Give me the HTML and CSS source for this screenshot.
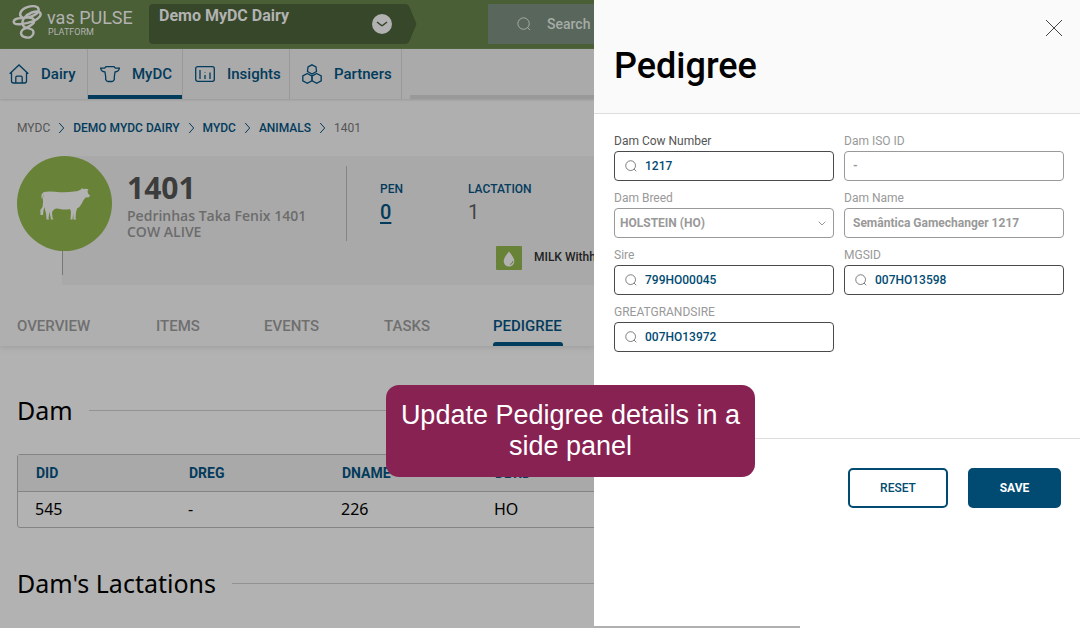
FILE: index.html
```html
<!DOCTYPE html>
<html lang="en">
<head>
<meta charset="utf-8">
<title>Pedigree - VAS PULSE Platform</title>
<link rel="stylesheet" href="styles.css">
</head>
<body>
<svg class="defs" aria-hidden="true">
  <symbol id="search" viewBox="0 0 16 16"><circle cx="7.5" cy="7.5" r="6.500"/><path d="M12 12 15 15"/></symbol>
  <symbol id="chevron" viewBox="0 0 6 12"><path d="M.7 1 5.2 6 .7 11"/></symbol>
</svg>
<div class="layout">
  <div class="app">
    <header class="topbar">
      <a class="brand" href="#">
        <svg class="brand-mark" viewBox="0 0 32 36" aria-hidden="true">
          <path d="M12 14C6 12 8 6 15 3C22 .5 28 1.500 27.500 6C27 11 16 14 10 14C4 14 1 16 2 18.500C3 22 14 20 22 17C29 14 31 10 28.500 8C25 5.500 16 9 12.500 14C9 19 11 23 15 24C20 25 23 26 22 30C21 33 18 34.500 15 34C9 33.500 8 29 11 26C14 23 23 22 23 17C23 14 19 13 16 13.500"/>
        </svg>
        <span class="brand-text"><span class="brand-name">vas PULSE</span><span class="brand-sub">PLATFORM</span></span>
      </a>
      <button class="farm" type="button">
        <svg class="farm-shape" viewBox="0 0 268 40" preserveAspectRatio="none" aria-hidden="true"><path d="M4 0H256Q259 0 260.500 3L267.500 20 260.500 37Q259 40 256 40H4Q0 40 0 36V4Q0 0 4 0Z"/></svg>
        <span class="farm-name">Demo MyDC Dairy</span>
        <svg class="farm-arrow" viewBox="0 0 20 20" aria-hidden="true"><circle cx="10" cy="10" r="10"/><path d="M5 8 9.500 11.500H10.500L15 8"/></svg>
      </button>
      <div class="top-search"><svg class="icon" aria-hidden="true"><use href="#search"/></svg><input type="search" placeholder="Search" aria-label="Search"></div>
    </header>
    <nav class="nav" aria-label="Main">
      <a class="nav-dairy" href="#"><svg viewBox="0 0 20 20" aria-hidden="true"><path d="M.7 9.700 10 1l9.300 8.700M2.500 8.500V17q0 2 2 2h11q2 0 2-2V8.500M6.800 19v-5.500q0-1.300 1.300-1.300h3.800q1.300 0 1.300 1.300V19"/></svg>Dairy</a>
      <a class="nav-mydc active" href="#"><svg viewBox="0 0 20 20" aria-hidden="true"><path d="M.6 4.200H4.500L6 2.700h8L15.500 4.200H19.400Q18.500 7.800 15 8L14.300 13V15.500Q13.500 17.500 12 17.500H8Q6.500 17.500 5.700 15.500V13L5 8Q1.500 7.800.6 4.200Z"/></svg>MyDC</a>
      <a class="nav-insights" href="#"><svg viewBox="0 0 20 20" aria-hidden="true"><rect x=".7" y="2.700" width="18.600" height="14.600" rx="2"/><path d="M5 6v9M10 11v4M15 8.500V15M10 8v.5"/></svg>Insights</a>
      <a class="nav-partners" href="#"><svg viewBox="0 0 20 20" aria-hidden="true"><path d="M10 .8 14 2.800 14.500 7.500 10 10 5.500 7.500 6 2.800ZM5.300 9.500 9.800 12v4.800L5.300 19.200.8 16.800V12ZM14.700 9.500 19.200 12v4.800L14.700 19.200 10.200 16.800V12Z"/></svg>Partners</a>
      <span class="nav-rest"></span>
    </nav>
    <div class="profile">
      <nav class="crumbs" aria-label="Breadcrumb">
        <span>MYDC</span><svg aria-hidden="true"><use href="#chevron"/></svg>
        <a href="#">DEMO MYDC DAIRY</a><svg aria-hidden="true"><use href="#chevron"/></svg>
        <a href="#">MYDC</a><svg aria-hidden="true"><use href="#chevron"/></svg>
        <a href="#">ANIMALS</a><svg aria-hidden="true"><use href="#chevron"/></svg>
        <span>1401</span>
      </nav>
      <section class="animal">
        <div class="avatar">
          <svg viewBox="0 0 50 32" aria-hidden="true"><path d="M4 4Q7 3.200 15 3.800Q26 5 34 3.500Q38 3.500 41 1.500L42 0l1 1L46 .8 48.500 1.200 47.500 3 48 5.500 50 7.500 49 9.200 45.500 9.500Q43 12 41.500 16Q40 19 37 20.500L36 24.500 35.500 30 36.500 31.500H33.500L33.300 25 32.500 31.500H30.500L31 24 30 21Q25 22 20 21Q16 20 14 21.500L12 24 12.500 30 13.500 31.500H11L10 26 9.500 24 8.500 30 9 31.500H6.500L6 25Q4.500 22 5 19L3.500 22 3 27 .5 27 .3 22 2.500 19Q3.500 14 2.800 10L3.500 7.500Q4 5.500 5.500 5.500Q3 6 2.700 9L2 11.500Q0 6 4 4Z"/></svg>
        </div>
        <div class="animal-card">
          <div class="identity"><h1>1401</h1><p>Pedrinhas Taka Fenix 1401</p><p>COW ALIVE</p></div>
          <div class="status">
            <dl class="facts">
              <div><dt>PEN</dt><dd><a href="#">0</a></dd></div>
              <div><dt>LACTATION</dt><dd>1</dd></div>
            </dl>
            <div class="milk"><svg viewBox="0 0 26 24" aria-hidden="true"><rect width="26" height="24" rx="1"/><path d="M13 5.500Q18.500 12 18.300 15.500 17.500 20.500 13 20.500 8.500 20.500 7.700 15.500 7.500 12 13 5.500Z"/><path class="shine" d="M14 18.500q2.500-.5 3-3.500"/></svg><span>MILK Withh</span></div>
          </div>
        </div>
      </section>
      <nav class="tabs" aria-label="Animal">
        <a class="tab-overview" href="#">OVERVIEW</a><a class="tab-items" href="#">ITEMS</a><a class="tab-events" href="#">EVENTS</a><a class="tab-tasks" href="#">TASKS</a><a class="active" href="#">PEDIGREE</a>
      </nav>
    </div>
    <main class="content">
      <h2>Dam</h2>
      <table>
        <thead><tr><th scope="col">DID</th><th scope="col">DREG</th><th scope="col">DNAME</th><th scope="col">DBRD</th></tr></thead>
        <tbody><tr><td>545</td><td>-</td><td>226</td><td>HO</td></tr></tbody>
      </table>
      <h2>Dam's Lactations</h2>
    </main>
  </div>
  <aside class="panel" aria-labelledby="panel-title">
    <header class="panel-head">
      <h2 id="panel-title">Pedigree</h2>
      <button class="close" type="button" aria-label="Close"><svg viewBox="0 0 18 18" aria-hidden="true"><path d="M1 1 17 17M17 1 1 17"/></svg></button>
    </header>
    <form class="form">
      <div class="fields">
        <div class="field strong"><label for="cow">Dam Cow Number</label><div class="control search"><svg class="icon" aria-hidden="true"><use href="#search"/></svg><input id="cow" type="text" value="1217"></div></div>
        <div class="field"><label for="iso">Dam ISO ID</label><div class="control off"><input id="iso" type="text" value="-" disabled></div></div>
        <div class="field"><label for="breed">Dam Breed</label><div class="control off breed"><select id="breed" disabled><option>HOLSTEIN (HO)</option></select><svg class="down" viewBox="0 0 8 5" aria-hidden="true"><path d="M.7.7 4 4 7.300.7"/></svg></div></div>
        <div class="field"><label for="name">Dam Name</label><div class="control off"><input id="name" type="text" value="Semântica Gamechanger 1217" disabled></div></div>
        <div class="field"><label for="sire">Sire</label><div class="control search"><svg class="icon" aria-hidden="true"><use href="#search"/></svg><input id="sire" type="text" value="799HO00045"></div></div>
        <div class="field"><label for="mgs">MGSID</label><div class="control search"><svg class="icon" aria-hidden="true"><use href="#search"/></svg><input id="mgs" type="text" value="007HO13598"></div></div>
        <div class="field"><label for="ggs">GREATGRANDSIRE</label><div class="control search"><svg class="icon" aria-hidden="true"><use href="#search"/></svg><input id="ggs" type="text" value="007HO13972"></div></div>
      </div>
      <div class="actions"><button class="reset" type="reset">RESET</button><button class="save" type="submit">SAVE</button></div>
    </form>
    <div class="panel-edge"></div>
  </aside>
</div>
<div class="callout" role="note">Update Pedigree details in a side panel</div>
</body>
</html>
```
FILE: styles.css
```css
* { box-sizing: border-box; }
body { margin: 0; font-family: Roboto, "Liberation Sans", sans-serif; color: #000; background: #fff; }
h1, h2, p, dl, dd { margin: 0; font-weight: 400; }
a { color: inherit; text-decoration: none; }
button, input, select { font: inherit; color: inherit; }
button { cursor: pointer; }
svg { flex: none; fill: none; stroke: currentColor; }
.defs { position: absolute; width: 0; height: 0; }
.icon { width: 12px; height: 12px; }
.layout { display: grid; grid-template-columns: 55fr 45fr; height: 100vh; overflow: hidden; }
.app { min-width: 0; overflow: hidden; background: #b2b2b2; }

.topbar { display: flex; height: 49px; background: #4a5f36; color: #b2b2b2; }
.brand { display: flex; flex: none; width: 149px; padding-left: 12px; }
.brand-mark { width: 31px; height: 36px; margin-top: 4px; stroke-width: 2.500; }
.brand-text { display: flex; flex-direction: column; padding: 8px 0 0 4px; white-space: nowrap; }
.brand-name { font-size: 18px; line-height: 19px; }
.brand-sub { padding-left: 1px; font-size: 9px; line-height: 10px; }
.farm { position: relative; display: flex; flex: none; width: 268px; height: 40px; margin: 4px 0 0; padding: 0 25px 0 10px; border: 0; background: none; justify-content: space-between; text-align: left; }
.farm-shape { position: absolute; inset: 0; width: 100%; height: 100%; fill: #37472a; stroke: none; }
.farm-name { position: relative; font-size: 16px; line-height: 23px; font-weight: 700; }
.farm-arrow { position: relative; width: 20px; height: 20px; margin-top: 10px; }
.farm-arrow circle { fill: #b2b2b2; stroke: none; }
.farm-arrow path { stroke: #37472a; stroke-width: 1.500; }
.top-search { display: flex; flex: none; align-items: center; width: 240px; height: 40px; margin: 4px 0 0 71px; padding-left: 29px; gap: 16px; background: #59665b; }
.top-search .icon { width: 14px; height: 14px; }
.top-search input { width: 140px; padding: 0; border: 0; background: none; font-size: 14px; font-weight: 500; }
.top-search input::placeholder { color: #a5aca6; opacity: 1; }

.nav { display: flex; height: 50px; background: #aaa; color: #033b5c; font-size: 15px; font-weight: 500; box-shadow: 0 1px 2px #999; position: relative; }
.nav a { display: flex; flex: none; align-items: center; border-right: 1px solid #999; }
.nav svg { width: 20px; height: 20px; stroke-width: 1.300; }
.nav-dairy { width: 88px; padding-left: 9px; gap: 12px; }
.nav-mydc { width: 95px; padding-left: 12px; gap: 12px; }
.nav-insights { width: 107px; padding-left: 12px; gap: 12px; }
.nav-partners { width: 112px; padding-left: 12px; gap: 12px; }
.nav .active { box-shadow: inset 0 -4px #033b5c; }
.nav-rest { flex: 1; margin-left: 8px; box-shadow: inset 0 -4px #999; }

.profile { background: #afafaf; box-shadow: 0 2px 5px #a0a0a0; }
.crumbs { display: flex; align-items: center; height: 57px; padding: 0 17px; gap: 8px; font-size: 12px; color: #555; white-space: nowrap; }
.crumbs a { color: #033b5c; font-weight: 500; }
.crumbs svg { width: 7px; height: 12px; stroke: #033b5c; }
.animal { position: relative; padding-left: 62px; }
.avatar { position: absolute; left: 17px; top: 0; display: grid; place-items: center; width: 95px; height: 95px; border-radius: 50%; background: #688338; }
.avatar svg { width: 50px; height: 32px; fill: #b2b2b2; stroke: none; }
.avatar::after { content: ""; position: absolute; left: 45px; top: 95px; width: 1px; height: 24px; background: #777; }
.animal-card { display: grid; grid-template-columns: 285px 1fr; height: 129px; padding-top: 10px; background: #a9a9a9; }
.identity { height: 75px; padding: 5px 0 0 65px; border-right: 1px solid #858585; font-family: "Noto Sans", sans-serif; color: #6c6c6c; white-space: nowrap; }
.identity h1 { padding-bottom: 3px; font-size: 30px; line-height: 34px; font-weight: 700; color: #3c3c3c; }
.identity p { font-family: "Open Sans", "Noto Sans", sans-serif; font-size: 14px; line-height: 16px; font-weight: 600; }
.status { min-width: 0; }
.facts { display: grid; grid-template-columns: 88px 1fr; padding: 15px 0 0 33px; }
.facts dt { font-size: 12px; line-height: 16px; font-weight: 500; color: #033b5c; }
.facts dd { font-size: 20px; line-height: 30px; color: #444; }
.facts a { color: #033b5c; text-decoration: underline; text-underline-offset: 3px; font-weight: 500; }
.milk { display: flex; gap: 12px; padding: 19px 0 0 149px; font-size: 12px; line-height: 22px; font-weight: 500; color: #222; white-space: nowrap; }
.milk svg { width: 26px; height: 24px; fill: #b2b2b2; stroke: none; }
.milk rect { fill: #688338; }
.milk .shine { fill: none; stroke: #688338; }
.tabs { display: flex; height: 61px; padding-left: 17px; color: #6f6f6f; font-size: 15px; font-weight: 500; line-height: 82px; white-space: nowrap; }
.tabs a { flex: none; height: 61px; }
.tab-overview { width: 139px; }
.tab-items { width: 108px; }
.tab-events { width: 120px; }
.tab-tasks { width: 109px; }
.tabs .active { display: flex; flex-direction: column; justify-content: space-between; width: 70px; color: #033b5c; }
.tabs .active::after { content: ""; flex: none; height: 4px; margin-top: -25px; border-radius: 3px 3px 0 0; background: #033b5c; }

.content { padding: 47px 0 0 17px; font-family: "Noto Sans", sans-serif; }
.content h2 { display: flex; align-items: center; gap: 16px; height: 34px; font-size: 25px; line-height: 34px; white-space: nowrap; }
.content h2::after { content: ""; flex: 1; height: 1px; background: #929292; }
.content table { width: 614px; margin: 27px 0 38px; border: 1px solid #848484; border-radius: 3px; border-spacing: 0; table-layout: fixed; }
th { height: 37px; padding: 0 18px; border-bottom: 1px solid #848484; background: #a9a9a9; color: #033b5c; font: 700 14px Roboto, sans-serif; text-align: left; }
td { height: 35px; padding: 0 17px 2px; font-size: 16px; }

.panel { display: flex; flex-direction: column; min-width: 0; background: #fff; }
.panel-head { display: flex; justify-content: space-between; height: 114px; padding: 19px 17px 0 20px; border-bottom: 1px solid #ddd; background: #fafafa; }
.panel-head h2 { padding-top: 24px; font-size: 36px; line-height: 46px; font-weight: 500; }
.close { width: 18px; height: 18px; padding: 0; border: 0; background: none; color: #444; }
.close svg { display: block; }
.form { flex: 1; }
.fields { display: grid; grid-template-columns: 1fr 1fr; gap: 7px 10px; align-content: start; min-height: 325px; padding: 17px 16px 0 20px; border-bottom: 1px solid #ddd; }
.field { min-width: 0; color: #999; }
.field label { display: block; font-size: 12px; line-height: 20px; }
.strong label { color: #555; }
.control { display: flex; align-items: center; height: 30px; border: 1px solid #4a4a4a; border-radius: 4px; background: #fff; font-size: 12px; font-weight: 500; }
.control.off { border-color: #999; }
.control input { flex: 1; min-width: 0; height: 28px; padding: 0 8px; border: 0; background: none; }
.control select { flex: 1; height: 28px; padding: 0 5px; border: 0; background: none; appearance: none; opacity: 1; }
.search { padding-left: 10px; color: #014b72; }
.search .icon { color: #555; }
.breed { padding-right: 7px; }
.down { width: 8px; height: 5px; }
.off input, .off select { font-weight: 700; }
.actions { display: flex; justify-content: flex-end; gap: 20px; padding: 29px 19px 0; }
.actions button { height: 40px; border: 2px solid #014b72; border-radius: 5px; font-size: 12px; }
.reset { width: 100px; background: #fff; color: #014b72; font-weight: 500; }
.save { width: 93px; background: #014b72; color: #fff; font-weight: 700; }
.panel-edge { width: 206px; height: 2px; background: #b0b0b0; }

.callout { position: absolute; left: 386px; top: 385px; width: 369px; padding: 15px 12px; border-radius: 13px; background: #882253; color: #fff; font-family: "Liberation Sans", Arial, sans-serif; font-size: 27px; line-height: 31px; text-align: center; }
```
